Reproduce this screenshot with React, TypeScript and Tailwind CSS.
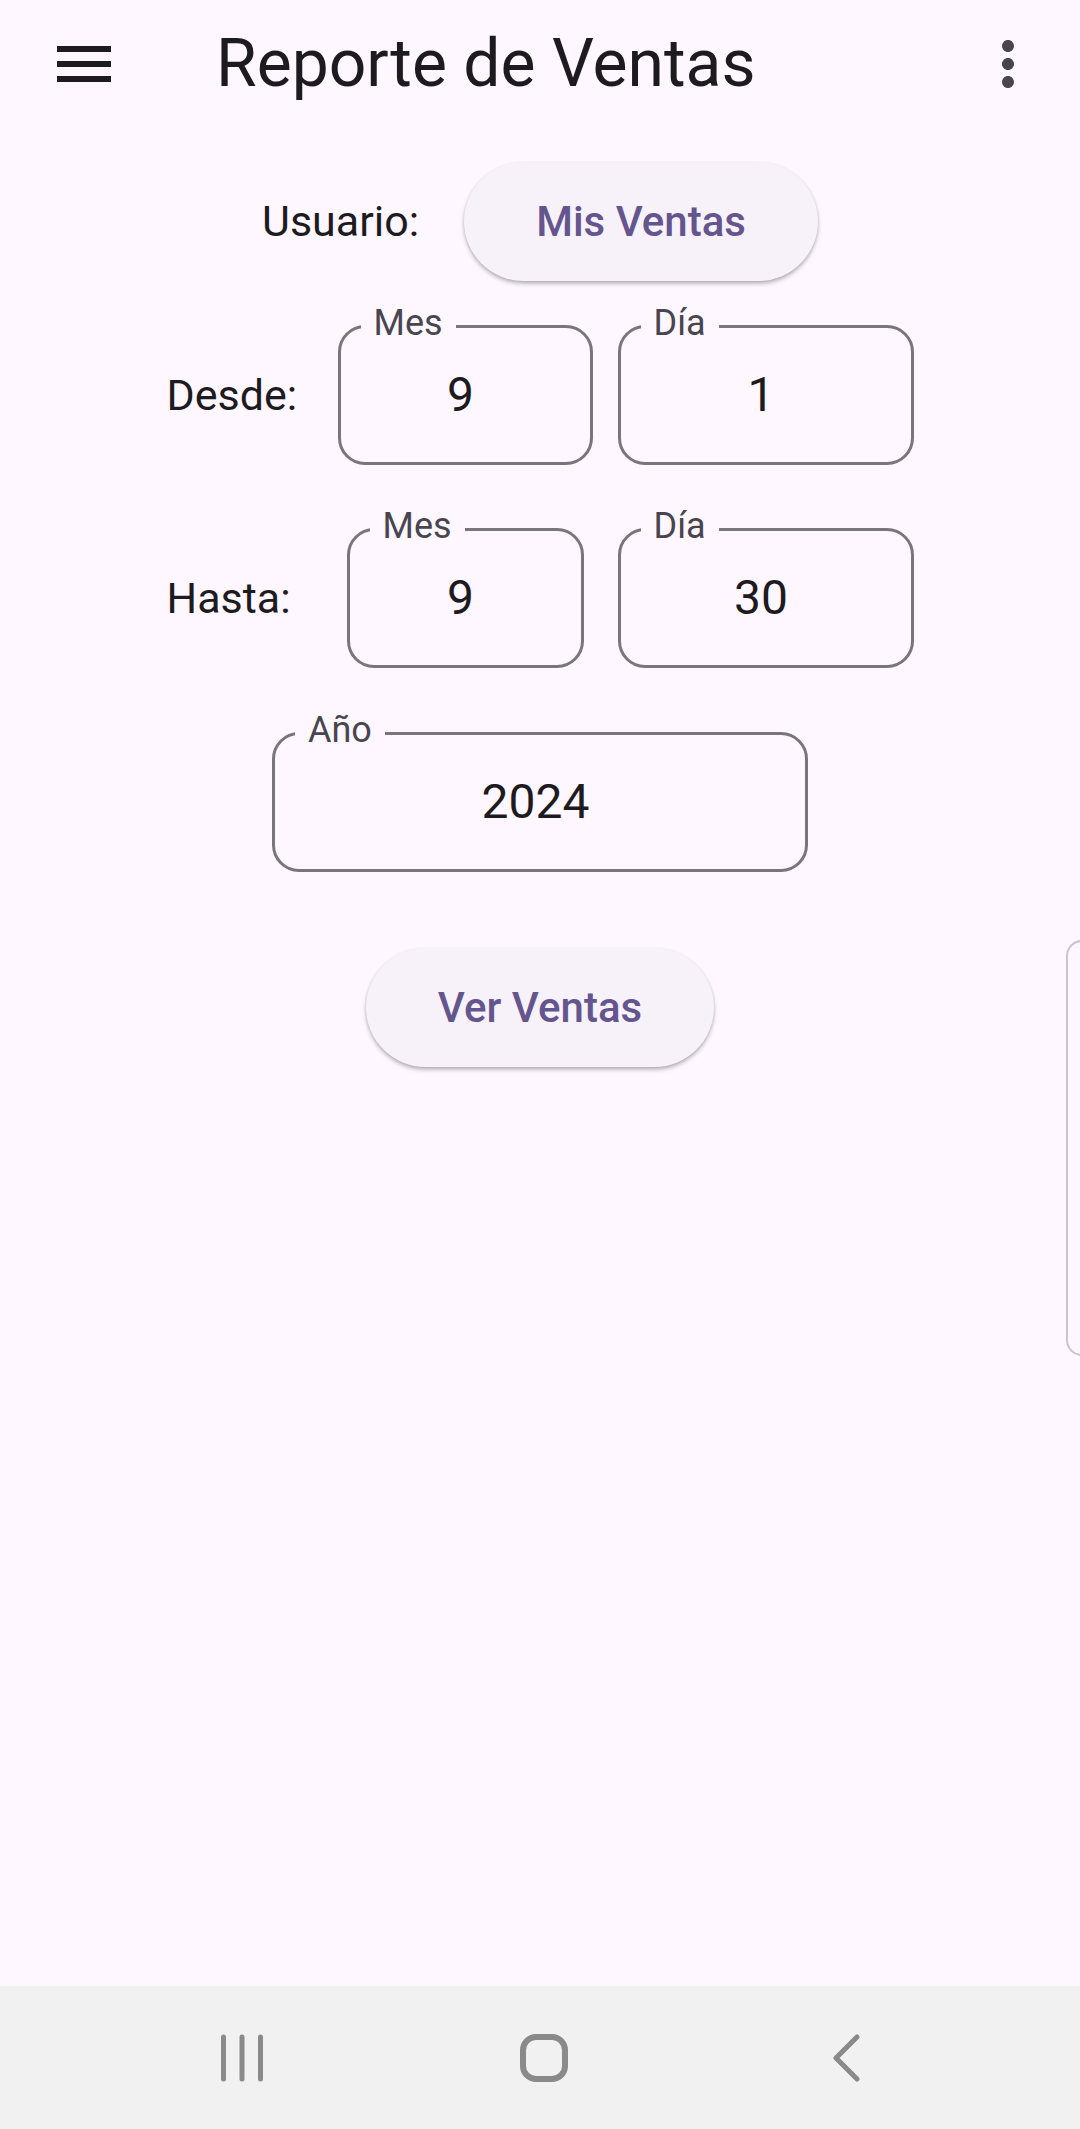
import React from 'react';

const BG = 'bg-[#fef7ff]';

function OutlinedField({ label, value, width }: { label: string; value: string; width: string }) {
  return (
    <div className={`relative h-[140px] ${width} rounded-[27px] border-[3px] border-[#79747e] flex items-center justify-center`}>
      <span
        className={`absolute left-[20px] top-[-5px] -translate-y-1/2 px-[13px] ${BG} text-[36px] leading-none text-[#49454f]`}
      >
        {label}
      </span>
      <span className="pr-[9px] text-[48px] leading-none text-[#1d1b20]">{value}</span>
    </div>
  );
}

function PillButton({ children }: { children: React.ReactNode }) {
  return (
    <button className="h-[119px] px-[72px] rounded-full bg-[#f7f2fa] text-[42px] font-medium text-[#65558f] shadow-[0_3px_4px_rgba(0,0,0,0.22),0_1px_3px_rgba(0,0,0,0.12)]">
      {children}
    </button>
  );
}

function DateRow({ label, mesWidth, mes, dia }: { label: string; mesWidth: string; mes: string; dia: string }) {
  return (
    <div className="flex items-center justify-center">
      <div className="w-[171px] text-[43px] text-[#1d1b20]">{label}</div>
      <div className="w-[255px] flex justify-center">
        <OutlinedField label="Mes" value={mes} width={mesWidth} />
      </div>
      <div className="ml-[25px]">
        <OutlinedField label="Día" value={dia} width="w-[296px]" />
      </div>
    </div>
  );
}

export default function App() {
  return (
    <div
      className={`relative h-[2129px] w-[1080px] overflow-hidden ${BG} flex flex-col`}
      style={{ fontFamily: 'Roboto, "Noto Sans", sans-serif' }}
    >
      {/* App bar */}
      <div className="h-[128px] flex items-center">
        <svg className="ml-[48px]" width="72" height="72" viewBox="0 0 24 24" fill="#1d1b20">
          <path d="M3 18h18v-2H3v2zm0-5h18v-2H3v2zm0-7v2h18V6H3z" />
        </svg>
        <h1 className="ml-[96px] text-[66px] leading-none text-[#1d1b20]">Reporte de Ventas</h1>
        <svg className="ml-auto mr-[36px]" width="72" height="72" viewBox="0 0 24 24" fill="#49454f">
          <path d="M12 8c1.1 0 2-.9 2-2s-.9-2-2-2-2 .9-2 2 .9 2 2 2zm0 2c-1.1 0-2 .9-2 2s.9 2 2 2 2-.9 2-2-.9-2-2-2zm0 6c-1.1 0-2 .9-2 2s.9 2 2 2 2-.9 2-2-.9-2-2-2z" />
        </svg>
      </div>

      {/* Usuario */}
      <div className="mt-[34px] flex items-center justify-center gap-[45px]">
        <span className="text-[43px] text-[#1d1b20]">Usuario:</span>
        <PillButton>Mis Ventas</PillButton>
      </div>

      <div className="mt-[44px]">
        <DateRow label="Desde:" mesWidth="w-[255px]" mes="9" dia="1" />
      </div>
      <div className="mt-[63px]">
        <DateRow label="Hasta:" mesWidth="w-[237px]" mes="9" dia="30" />
      </div>

      <div className="mt-[64px] flex justify-center">
        <OutlinedField label="Año" value="2024" width="w-[536px]" />
      </div>

      <div className="mt-[76px] flex justify-center">
        <PillButton>Ver Ventas</PillButton>
      </div>

      {/* edge of a side sheet peeking in */}
      <div className="absolute left-[1066px] top-[940px] h-[416px] w-[40px] rounded-l-[16px] border-2 border-r-0 border-[#c9c5cc]" />

      {/* System navigation bar */}
      <div className="mt-auto h-[143px] pl-[8px] bg-[#f1f1f1] flex items-center justify-center">
        <div className="w-[302px] flex justify-center">
          <svg width="44" height="48" viewBox="0 0 44 48" fill="none" stroke="#8a8a8a" strokeWidth="5" strokeLinecap="round">
            <path d="M3.5 3v42M22 3v42M40.5 3v42" />
          </svg>
        </div>
        <div className="w-[302px] flex justify-center">
          <div className="h-[48px] w-[48px] rounded-[16px] border-[6px] border-[#8a8a8a]" />
        </div>
        <div className="w-[302px] flex justify-center">
          <svg width="30" height="48" viewBox="0 0 30 48" fill="none" stroke="#8a8a8a" strokeWidth="5" strokeLinecap="round" strokeLinejoin="round">
            <path d="M26 3L5 24l21 21" />
          </svg>
        </div>
      </div>
    </div>
  );
}
